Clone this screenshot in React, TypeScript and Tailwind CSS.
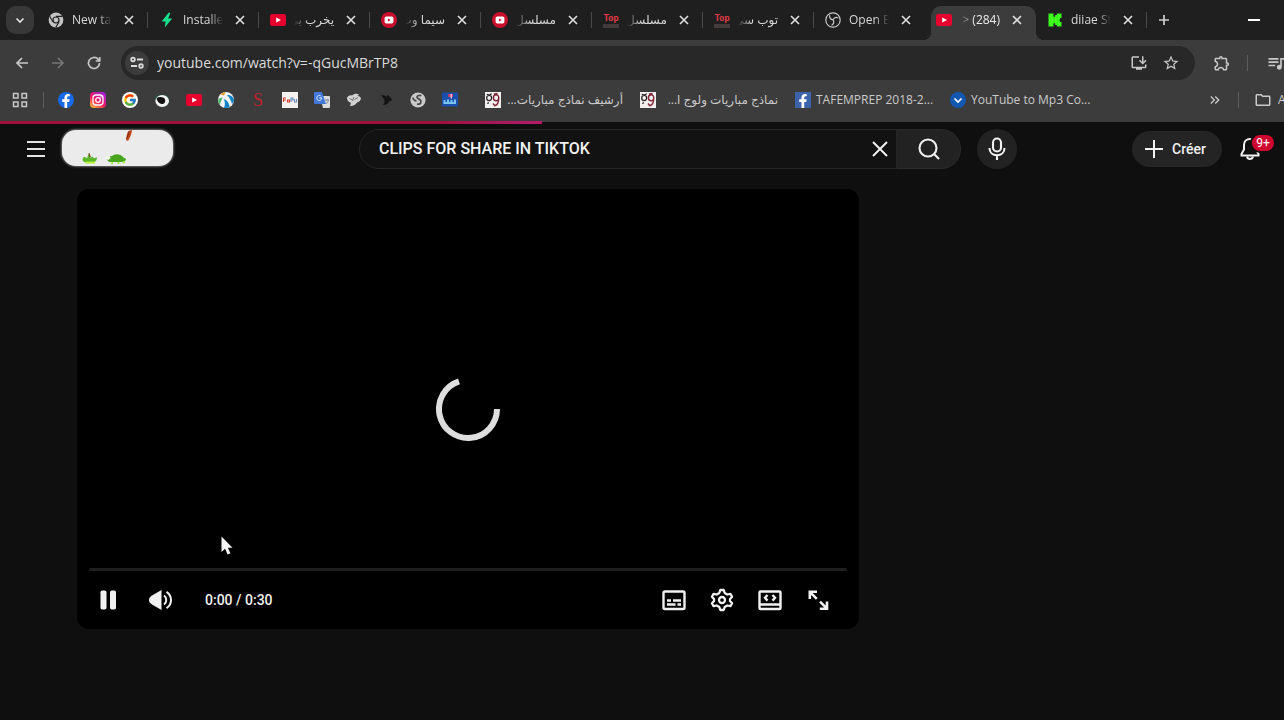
import { useState, type ReactNode } from 'react';
import { FcGoogle } from 'react-icons/fc';
import { FaFacebookF } from 'react-icons/fa';
import {
  MdKeyboardDoubleArrowRight,
  MdOutlineExtension,
  MdOutlineFolder,
  MdOutlineInstallDesktop,
  MdQueueMusic,
  MdStarOutline,
} from 'react-icons/md';

interface Tab {
  id: number;
  title: string;
  icon: ReactNode;
  rtl?: boolean;
  active?: boolean;
  divider?: boolean;
}

interface Bookmark {
  label: string;
  icon: ReactNode;
  rtl?: boolean;
}

/* ---------- line icons, drawn on a 16px grid ---------- */

const LINES = {
  close: 'M4 4l8 8M12 4l-8 8',
  plus: 'M8 3v10M3 8h10',
  chevron: 'M4.5 6.5 8 10l3.500-3.500',
  back: 'M14 8H3M8 3 3 8l5 5',
  forward: 'M2 8h11M8 3l5 5-5 5',
  reload: 'M13.500 8A5.500 5.500 0 1 1 12 4.200L13.500 5.800M13.700 2v4H9.700',
};

function LineIcon({ name }: { name: keyof typeof LINES }) {
  return (
    <svg viewBox="0 0 16 16" className="size-4" fill="none" stroke="currentColor" strokeWidth="1.700">
      <path d={LINES[name]} />
    </svg>
  );
}

/* ---------- favicons ---------- */

function ChromeIcon() {
  return (
    <svg viewBox="0 0 16 16" className="size-4">
      <circle cx="8" cy="8" r="7.4" fill="#c4c4c4" />
      <circle cx="8" cy="8" r="3.6" fill="#1f1f1f" />
      <circle cx="8" cy="8" r="2.4" fill="#c4c4c4" />
      <path d="M8 4.4h6.6M4.9 9.8 1.6 4.2M11.1 9.8 7.8 15.4" stroke="#1f1f1f" strokeWidth="1.1" />
    </svg>
  );
}

function BoltIcon() {
  return (
    <svg viewBox="0 0 16 16" className="size-4">
      <path d="M9.6.8 2.6 9.4h4L5.8 15.4 13.2 6.4H9.2L11.4.8z" fill="#19e08f" />
    </svg>
  );
}

function YoutubeIcon() {
  return (
    <svg viewBox="0 0 16 16" className="size-4">
      <rect x="0" y="2" width="16" height="12" rx="2" fill="#e6002d" />
      <path d="M6.2 5.4v5.2L11 8z" fill="#fff" />
    </svg>
  );
}

function CimaIcon() {
  return (
    <svg viewBox="0 0 16 16" className="size-4">
      <circle cx="8" cy="8" r="8" fill="#c8102e" />
      <rect x="3.6" y="4.6" width="8.8" height="6.8" rx="1.6" fill="#fff" />
      <path d="M7 6.4v3.2L9.6 8z" fill="#c8102e" />
    </svg>
  );
}

function TopIcon() {
  return (
    <span className="flex size-4 flex-col items-center justify-center font-['Roboto',sans-serif] leading-none">
      <b className="text-[9px] leading-[11px] text-[#e03a44]">Top</b>
      <span className="h-1 w-4 bg-[#453a3b]" />
    </span>
  );
}

function ObsIcon() {
  return (
    <svg viewBox="0 0 16 16" className="size-4" fill="none" stroke="#c8c8c8" strokeWidth="1.2">
      <circle cx="8" cy="8" r="7.2" />
      <path d="M4.6 3.2C4.4 5.800 5.800 7.600 8 7.800M8 7.800c1-2 3.200-2.800 5.400-1.800M8 7.800c1.200 2 .6 4.200-1.400 5.400" />
    </svg>
  );
}

function KickIcon() {
  return (
    <svg viewBox="0 0 16 16" className="size-4">
      <path
        d="M1.5 1.5h5v3.2h1.7V3h1.7V1.5h4.6v4.6h-1.6v1.8h-1.6v.4h1.6v1.8h1.6v4.4H9.9V13H8.2v-1.7H6.5v3.2h-5z"
        fill="#3dfc1c"
      />
    </svg>
  );
}

function FacebookRound() {
  return (
    <span className="flex size-4 items-end justify-center overflow-hidden rounded-full bg-[#1768e5] text-white">
      <FaFacebookF className="size-3.5" />
    </span>
  );
}

function InstagramIcon() {
  return (
    <svg viewBox="0 0 16 16" className="size-4" fill="none">
      <defs>
        <linearGradient id="insta" x1="0.1" y1="1" x2="0.8" y2="0">
          <stop offset="0" stopColor="#ffc13a" />
          <stop offset="0.45" stopColor="#f3175e" />
          <stop offset="1" stopColor="#a61ee0" />
        </linearGradient>
      </defs>
      <rect width="16" height="16" rx="4" fill="url(#insta)" />
      <rect x="3" y="3" width="10" height="10" rx="3" stroke="#fff" strokeWidth="1.3" />
      <circle cx="8" cy="8" r="2.3" stroke="#fff" strokeWidth="1.3" />
      <circle cx="11" cy="5" r="0.7" fill="#fff" />
    </svg>
  );
}

function GoogleIcon() {
  return (
    <span className="flex size-4 items-center justify-center rounded-full bg-white">
      <FcGoogle className="size-3.5" />
    </span>
  );
}

function EyeIcon() {
  return (
    <svg viewBox="0 0 16 16" className="size-4">
      <path d="M1 5c3-2 9-3 13 0 2 5 0 9-5 10C4 15 1 10 1 5z" fill="#1d5a3e" />
      <ellipse cx="8.2" cy="9" rx="6.8" ry="6" fill="#f4f4f4" />
      <path d="M2.600 6c3-1.800 7-1.200 8.400 1.200.8 3-1 5.200-3.600 4.800C4.800 11.600 3 9 2.600 6z" fill="#111" />
    </svg>
  );
}

function BallIcon() {
  return (
    <svg viewBox="0 0 16 16" className="size-4">
      <circle cx="8" cy="8" r="8" fill="#f3f3f3" />
      <path d="M9 3c4-.6 6.400 2 7 5-.2 1.600-1 3-2 4C13 8.600 11.600 5.600 9 3z" fill="#1685c8" />
      <path d="M5.800 7C9 8 11.400 11 11.600 15.200 9.600 16.200 7.600 16.200 6 15.700 7.400 12.600 7 9.600 5.800 7z" fill="#1685c8" />
      <path d="M2.400 2.400C4 1 5.600.3 7.600 0L6 3.600z" fill="#e3a02a" />
      <path d="M.4 7c1.600-1 3-1.600 4.200-1.600L1.600 12.800C.6 11.200 0 9 .4 7z" fill="#4fb96a" />
    </svg>
  );
}

function LetterS() {
  return (
    <span className="flex size-4 items-center justify-center font-['Liberation_Serif',serif] text-lg leading-none text-[#c3202f]">
      S
    </span>
  );
}

function PaperIcon() {
  return (
    <span className="flex size-4 items-center justify-center overflow-hidden bg-[#f4f1f1]">
      <svg viewBox="0 0 16 6" className="h-1.5 w-4" fill="none">
        <path d="M1.500 5V1h2.500M1.500 3H4M5.500 3v2h2V3z" stroke="#d8412f" strokeWidth="1.100" />
        <path d="M9 5V1h2v2H9M12.500 2v3h2V2" stroke="#6b8ac0" strokeWidth="1.100" />
      </svg>
    </span>
  );
}

function TranslateIcon() {
  return (
    <svg viewBox="0 0 16 16" className="size-4">
      <path d="M6 4h9a1 1 0 0 1 1 1v10a1 1 0 0 1-1 1H9z" fill="#dcdcdc" />
      <path d="M1 0h7l4 12H1a1 1 0 0 1-1-1V1a1 1 0 0 1 1-1z" fill="#4279d8" />
      <path
        d="M7.800 5.800H5.200M7.600 6c0 1.600-1 2.600-2.400 2.600S2.800 7.600 2.800 6 4 3.400 5.200 3.400c.7 0 1.200.2 1.600.6"
        stroke="#d6e2fa"
        fill="none"
      />
      <path d="M11 8h4M13 7v1M14.400 8c-.4 2-1.400 3-2.400 3.800" stroke="#5a6d90" fill="none" strokeWidth="0.800" />
    </svg>
  );
}

function WingIcon() {
  return (
    <svg viewBox="0 0 16 16" className="size-4">
      <path
        d="M1 6c1-2 2.500-3 5-2.500C8 1.500 11 1 13 2.500c-.4.800-1 1.200-2 1.500 2-.4 3.600.6 4 2.500-.6 2.500-2 3.500-4 4C9.500 13 7 14.500 3.500 14c1.500-1.200 1.500-2.500 1-3.500C2.500 10 1 8.500 1 6z"
        fill="#d2d2d2"
      />
      <path d="M3.500 6.500l3 1.500M8 5l-1.500 4M12 5.500 8.500 7.500" stroke="#666" strokeWidth="0.900" />
    </svg>
  );
}

function BirdIcon() {
  return (
    <svg viewBox="0 0 16 16" className="size-4">
      <path d="M2.500 3.500c3-.5 5 0 6.500 1.500V2.500L12 5l2.500 3L11 9.500C10 12 8 13.500 5 13c2-1.500 3-6-2.500-9.500z" fill="#141414" />
    </svg>
  );
}

function GlobeIcon() {
  return (
    <svg viewBox="0 0 16 16" className="size-4" fill="none">
      <circle cx="8" cy="8" r="7.6" fill="#c9c9c9" />
      <path d="M11.500 3.500C8.500 3 6.500 4 7 5.500S11 7 11 9.500 9 12.500 7 12M3 5.500c0 2 1.500 3 3.500 3.500" stroke="#4a4a4a" strokeWidth="1.700" />
    </svg>
  );
}

function PixelIcon() {
  return (
    <svg viewBox="0 0 16 16" className="size-4">
      <rect y="0.500" width="16" height="14" rx="1" fill="#1a4fae" />
      <path d="M6 2h5v3H6z" fill="#c23a6a" />
      <path d="M8.500 2h1.500v4.500H8.500z" fill="#e8b6cf" />
      <path d="M1.500 8h2v2h1.500V7.500h2V10h1.500V8h2v2H12V7.500h2V12H1.500z" fill="#7cc3f2" />
    </svg>
  );
}

function NinesIcon() {
  return (
    <svg viewBox="0 0 18 18" className="size-4" fill="none">
      <rect width="18" height="18" fill="#f3f0f0" />
      <path d="M2 2.500l3 1 2.500-1.500M7.500 6.500a2.800 3 0 1 0-2.800 3.200A2.800 3 0 0 0 7.500 6.500zM2.500 13l2-1" stroke="#2a2226" strokeWidth="1.400" />
      <path d="M15.500 6.500a3 3.400 0 1 0-3 3.400 3 3.400 0 0 0 3-3.400zM15.500 6.500c0 5-1 8-4.500 9L9 13M10 2.500l4-1" stroke="#7e2434" strokeWidth="1.600" />
    </svg>
  );
}

function FacebookSquare() {
  return (
    <span className="flex size-4 items-end justify-end bg-[#3e63ad] pr-px text-white">
      <FaFacebookF className="size-3.5" />
    </span>
  );
}

function DownBadge() {
  return (
    <span className="flex size-4 items-center justify-center rounded-full bg-[#1257b0] text-white">
      <LineIcon name="chevron" />
    </span>
  );
}

/* ---------- data ---------- */

const TABS: Tab[] = [
  { id: 1, title: 'New tab', icon: <ChromeIcon />, divider: true },
  { id: 2, title: 'Installed', icon: <BoltIcon />, divider: true },
  { id: 3, title: 'يخرب بي', icon: <YoutubeIcon />, rtl: true, divider: true },
  { id: 4, title: 'سيما وب', icon: <CimaIcon />, rtl: true, divider: true },
  { id: 5, title: 'مسلسل', icon: <CimaIcon />, rtl: true, divider: true },
  { id: 6, title: 'مسلسل', icon: <TopIcon />, rtl: true, divider: true },
  { id: 7, title: 'توب سي', icon: <TopIcon />, rtl: true, divider: true },
  { id: 8, title: 'Open B', icon: <ObsIcon /> },
  { id: 9, title: '> (284)', icon: <YoutubeIcon />, rtl: true, active: true },
  { id: 10, title: 'diiae St', icon: <KickIcon />, divider: true },
];

const SHORTCUTS: Bookmark[] = [
  { label: 'Facebook', icon: <FacebookRound /> },
  { label: 'Instagram', icon: <InstagramIcon /> },
  { label: 'Google', icon: <GoogleIcon /> },
  { label: 'Eye', icon: <EyeIcon /> },
  { label: 'YouTube', icon: <YoutubeIcon /> },
  { label: 'Sport', icon: <BallIcon /> },
  { label: 'S', icon: <LetterS /> },
  { label: 'Paper', icon: <PaperIcon /> },
  { label: 'Translate', icon: <TranslateIcon /> },
  { label: 'Wing', icon: <WingIcon /> },
  { label: 'Bird', icon: <BirdIcon /> },
  { label: 'Web', icon: <GlobeIcon /> },
  { label: 'Pixel', icon: <PixelIcon /> },
];

const BOOKMARKS: Bookmark[] = [
  { label: 'أرشيف نماذج مباريات...', icon: <NinesIcon />, rtl: true },
  { label: 'نماذج مباريات ولوج ا...', icon: <NinesIcon />, rtl: true },
  { label: 'TAFEMPREP 2018-2...', icon: <FacebookSquare /> },
  { label: 'YouTube to Mp3 Co...', icon: <DownBadge /> },
];

/* ---------- browser chrome ---------- */

function TabItem({ tab }: { tab: Tab }) {
  return (
    <div className="relative flex w-[111px] shrink-0 items-center">
      {tab.active && (
        <div className="absolute inset-x-[3px] top-1.5 bottom-0 rounded-t-[10px] bg-[#3c3c3c]">
          <span className="absolute bottom-0 -left-2 size-2 bg-[radial-gradient(circle_at_0_0,transparent_8px,#3c3c3c_8px)]" />
          <span className="absolute -right-2 bottom-0 size-2 bg-[radial-gradient(circle_at_100%_0,transparent_8px,#3c3c3c_8px)]" />
        </div>
      )}
      <button type="button" className="relative flex items-center gap-2 pl-2">
        <span className="size-4 shrink-0">{tab.icon}</span>
        <span
          dir={tab.rtl ? 'rtl' : 'ltr'}
          className={`w-10 overflow-hidden text-start text-xs leading-5 whitespace-nowrap ${
            tab.rtl
              ? '[mask-image:linear-gradient(to_left,black_65%,transparent)]'
              : '[mask-image:linear-gradient(to_right,black_65%,transparent)]'
          } ${tab.active ? 'text-[#ececec]' : 'text-[#d8d8d8]'}`}
        >
          <bdi dir="auto">{tab.title}</bdi>
        </span>
      </button>
      <button type="button" aria-label="Close tab" className="relative ml-[9px] flex size-4 items-center justify-center text-[#dcdcdc]">
        <LineIcon name="close" />
      </button>
      {tab.divider && <span className="ml-2.5 h-4 w-px bg-[#4a4a4a]" />}
    </div>
  );
}

function TabStrip() {
  return (
    <div className="flex h-10 overflow-hidden bg-[#1f1f1f]">
      <button
        type="button"
        aria-label="Search tabs"
        className="mx-1.5 mt-1.5 flex size-7 shrink-0 items-center justify-center rounded-[10px] bg-[#383838] text-[#e0e0e0]"
      >
        <LineIcon name="chevron" />
      </button>
      {TABS.map(tab => (
        <TabItem key={tab.id} tab={tab} />
      ))}
      <button type="button" aria-label="New tab" className="ml-1 flex w-5 shrink-0 items-center justify-center text-[#d0d0d0]">
        <LineIcon name="plus" />
      </button>
      <button type="button" aria-label="Minimize" className="mr-6 ml-auto flex w-3 items-center">
        <span className="h-0.5 w-full bg-white" />
      </button>
    </div>
  );
}

function AddressBar() {
  const [url, setUrl] = useState('youtube.com/watch?v=-qGucMBrTP8');

  return (
    <div className="flex h-[46px] items-center overflow-hidden">
      <div className="flex w-[121px] shrink-0 items-center gap-5 pl-3.5 text-[#c8c8c8]">
        <button type="button" aria-label="Back">
          <LineIcon name="back" />
        </button>
        <button type="button" aria-label="Forward" className="text-[#757575]">
          <LineIcon name="forward" />
        </button>
        <button type="button" aria-label="Reload">
          <LineIcon name="reload" />
        </button>
      </div>
      <div className="flex h-[34px] min-w-0 flex-1 items-center rounded-full bg-[#282828] pr-[15px] pl-1 text-[#c8c8c8]">
        <button type="button" aria-label="Site information" className="flex size-6 items-center justify-center rounded-full bg-[#3c3c3c]">
          <svg viewBox="0 0 16 16" className="size-4" fill="none" stroke="#dcdcdc" strokeWidth="1.800">
            <circle cx="4" cy="4.500" r="1.800" />
            <path d="M8 4.500h6M2 11h6" />
            <circle cx="12" cy="11" r="1.800" />
          </svg>
        </button>
        <input
          aria-label="Address"
          value={url}
          onChange={e => setUrl(e.target.value)}
          className="ml-2 min-w-0 flex-1 bg-transparent text-sm text-[#dadada] outline-none"
        />
        <button type="button" aria-label="Install app">
          <MdOutlineInstallDesktop className="size-[18px]" />
        </button>
        <button type="button" aria-label="Bookmark this page" className="ml-3.5">
          <MdStarOutline className="size-[18px]" />
        </button>
      </div>
      <div className="flex w-[89px] shrink-0 items-center text-[#c8c8c8]">
        <button type="button" aria-label="Extensions" className="ml-[18px] shrink-0">
          <MdOutlineExtension className="size-[18px]" />
        </button>
        <span className="ml-4 h-4 w-px shrink-0 bg-[#5c5c5c]" />
        <button type="button" aria-label="Media" className="ml-[18px] shrink-0">
          <MdQueueMusic className="size-5" />
        </button>
      </div>
    </div>
  );
}

function BookmarkBar() {
  return (
    <div className="flex h-9 items-start overflow-hidden text-xs leading-5 text-[#cacaca]">
      <div className="flex h-7 w-full items-center">
        <button type="button" aria-label="Apps" className="ml-3 shrink-0">
          <svg viewBox="0 0 16 16" className="size-4" fill="none" stroke="#c6c6c6" strokeWidth="1.500">
            <rect x="1.500" y="1.500" width="4.500" height="4.500" />
            <rect x="10" y="1.500" width="4.500" height="4.500" />
            <rect x="1.500" y="10" width="4.500" height="4.500" />
            <rect x="10" y="10" width="4.500" height="4.500" />
          </svg>
        </button>
        <span className="mr-3.5 ml-[15px] h-4 w-px shrink-0 bg-[#5c5c5c]" />
        <nav aria-label="Shortcuts" className="mr-[27px] flex shrink-0 gap-4">
          {SHORTCUTS.map(item => (
            <a key={item.label} href="#" aria-label={item.label} className="flex size-4 items-center justify-center">
              {item.icon}
            </a>
          ))}
        </nav>
        {BOOKMARKS.map(item => (
          <a key={item.label} href="#" className="mr-[17px] flex w-[138px] shrink-0 items-center gap-[5px]">
            <span className="size-4 shrink-0">{item.icon}</span>
            <span dir={item.rtl ? 'rtl' : 'ltr'} className="flex-1 whitespace-nowrap">
              {item.label}
            </span>
          </a>
        ))}
        <div className="ml-auto flex w-[77px] shrink-0 items-center overflow-hidden">
          <button type="button" aria-label="More bookmarks" className="shrink-0">
            <MdKeyboardDoubleArrowRight className="size-4" />
          </button>
          <span className="mx-[15px] h-4 w-px shrink-0 bg-[#5c5c5c]" />
          <a href="#" className="flex shrink-0 items-center gap-1.5">
            <MdOutlineFolder className="size-[18px]" />A
          </a>
        </div>
      </div>
    </div>
  );
}

/* ---------- page ---------- */

function DoodleLogo() {
  return (
    <a
      href="#"
      aria-label="Home"
      className="relative mb-0.5 ml-[17px] block h-9 w-[111px] overflow-hidden rounded-[14px] bg-[#ebebeb] shadow-[0_0_2px_1px_#6a6a6a]"
    >
      <svg viewBox="0 0 112 37" className="h-full w-full">
        <path d="M66 3c1-2 3-3 5-3-.5 4-2 8-4 11-2 .5-2.500-1-2-3z" fill="#c24a1c" />
        <path d="M68 1c-.5 3-1.500 6-2.500 8" stroke="#7c3414" />
        <path d="M20 31c0-2 1-4 3-3l2 1c0-2 .5-3 2-4l1 4c1-1 2-2 3-1l1 1 3-1c0 3-2 6-7 6-4 0-7-1-8-3z" fill="#5cb82a" />
        <path d="M23 33.500h10" stroke="#b4f03a" strokeWidth="2" />
        <path d="M26.500 24l1.500 4" stroke="#7b5a28" strokeWidth="1.500" />
        <path d="M45 30c0-3 3-4 5-3 3-3 9-3 12 1l3 2c-1 2-3 3-5 3H50c-3 0-4-1-5-3z" fill="#4aa51e" />
        <path d="M44 28l4-2 1 3-3 2z" fill="#f6fbe8" />
        <path d="M51 33l-1 2M57 33v2M62 32l1 2" stroke="#9bea3a" strokeWidth="2" />
      </svg>
    </a>
  );
}

function SearchBox() {
  const [query, setQuery] = useState('CLIPS FOR SHARE IN TIKTOK');

  return (
    <form role="search" className="flex h-10 min-w-0 flex-1" onSubmit={e => e.preventDefault()}>
      <div className="flex min-w-0 flex-1 items-center rounded-l-full border border-[#262626] bg-[#121212] pr-1.5 pl-[19px]">
        <input
          aria-label="Rechercher"
          value={query}
          onChange={e => setQuery(e.target.value)}
          className="min-w-0 flex-1 bg-transparent text-base font-medium text-[#f1f1f1] outline-none"
        />
        <button type="button" aria-label="Effacer" onClick={() => setQuery('')}>
          <svg viewBox="0 0 20 20" className="size-5" fill="none" stroke="#f1f1f1" strokeWidth="2">
            <path d="M3 3l14 14M17 3 3 17" />
          </svg>
        </button>
      </div>
      <button
        type="submit"
        aria-label="Lancer la recherche"
        className="flex w-16 items-center justify-center rounded-r-full border border-l-0 border-[#2b2b2b] bg-[#222]"
      >
        <svg viewBox="0 0 24 24" className="size-6" fill="none" stroke="#f1f1f1" strokeWidth="2.100">
          <circle cx="11" cy="11" r="8.500" />
          <path d="M17 17l5 5" />
        </svg>
      </button>
    </form>
  );
}

function Masthead() {
  return (
    <header className="flex h-[53px] items-center">
      <div className="flex w-[359px] shrink-0 items-center pl-[27px]">
        <button type="button" aria-label="Menu" className="flex h-4 w-[18px] flex-col justify-between">
          <span className="h-0.5 w-full bg-[#e4e4e4]" />
          <span className="h-0.5 w-full bg-[#e4e4e4]" />
          <span className="h-0.5 w-full bg-[#e4e4e4]" />
        </button>
        <DoodleLogo />
      </div>
      <div className="flex min-w-0 flex-1 gap-4">
        <SearchBox />
        <button type="button" aria-label="Recherche vocale" className="flex size-10 shrink-0 items-center justify-center rounded-full bg-[#222]">
          <svg viewBox="0 0 24 24" className="size-6" fill="none" stroke="#f1f1f1" strokeWidth="2.100">
            <rect x="8" y="1.500" width="8" height="13" rx="4" />
            <path d="M4.500 11c0 4.500 3.200 7.300 7.500 7.300s7.500-2.800 7.500-7.300M12 18.300V23" />
          </svg>
        </button>
      </div>
      <div className="flex w-[267px] shrink-0 items-center justify-end pr-2.5">
        <button
          type="button"
          className="flex h-9 items-center gap-2 rounded-full bg-[#242424] pr-4 pl-3 text-sm font-medium text-[#f1f1f1]"
        >
          <svg viewBox="0 0 20 20" className="size-5" stroke="#f1f1f1" strokeWidth="2">
            <path d="M10 1v18M1 10h18" />
          </svg>
          Créer
        </button>
        <button type="button" aria-label="Notifications" className="relative ml-4 flex h-10 w-9 items-center">
          <svg viewBox="0 0 24 24" className="size-6" fill="none" stroke="#f1f1f1" strokeWidth="2">
            <path d="M12 2C8.400 2 6 4.600 6 8v4.500L3.500 17v1.500h17V17L18 12.500V8c0-3.400-2.400-6-6-6z" />
            <path d="M9 19.500c.4 1.600 1.500 2.500 3 2.500s2.600-.9 3-2.500" />
          </svg>
          <span className="absolute top-1.5 right-0 flex h-4 w-[22px] items-center justify-center rounded-full bg-[#d0052f] text-xs text-white ring-2 ring-[#0f0f0f]">
            9+
          </span>
        </button>
      </div>
    </header>
  );
}

function ControlButton({ label, children }: { label: string; children: ReactNode }) {
  return (
    <button type="button" aria-label={label} className="flex size-12 items-center justify-center">
      {children}
    </button>
  );
}

function Player() {
  return (
    <section aria-label="Lecteur vidéo" className="relative flex aspect-video w-full flex-col rounded-xl bg-black">
      <div className="absolute inset-0 flex items-center justify-center">
        <svg viewBox="0 0 64 64" className="size-16" fill="none">
          <path d="M61 32A29 29 0 1 1 23 4.400" stroke="#dedede" strokeWidth="6" />
        </svg>
      </div>
      <svg viewBox="0 0 12 19" className="absolute top-[347px] left-36 h-[19px] w-3">
        <path d="M.5.500v15.500l3.600-3.300 2.500 5.800 2.800-1.200-2.500-5.600h4.600z" fill="#f4f4f4" />
      </svg>

      <div className="relative mt-auto">
        <div className="mx-3 h-[3px] rounded-full bg-[#1e1e1e]" />
        <div className="flex h-[58px] items-center pr-[17px] pl-2 text-[#f1f1f1]">
          <ControlButton label="Pause">
            <svg viewBox="0 0 24 24" className="size-6" fill="#f1f1f1">
              <rect x="3.500" y="2.500" width="6" height="19" rx="1.800" />
              <rect x="13" y="2.500" width="6" height="19" rx="1.800" />
            </svg>
          </ControlButton>
          <ControlButton label="Volume">
            <svg viewBox="0 0 24 24" className="ml-2 size-6" fill="none">
              <path d="M12.500 2v20L3 16.500C1 15.200 0 14 0 12s1-3.200 3-4.500z" fill="#f1f1f1" />
              <path d="M15 7.500c3 2 3 7 0 9M17.500 3.800c6 4 6 12.400 0 16.400" stroke="#f1f1f1" strokeWidth="2" />
            </svg>
          </ControlButton>
          <span className="ml-6 text-sm font-medium">0:00 / 0:30</span>
          <div className="ml-auto flex">
            <ControlButton label="Sous-titres">
              <svg viewBox="0 0 24 24" className="size-6" fill="none" stroke="#f1f1f1" strokeWidth="2.400">
                <rect x="1.500" y="3.500" width="21" height="17.500" rx="1.500" />
                <path d="M5 12.500h4M11 12.500h8M5 16.500h8.500M15.500 16.500H19" />
              </svg>
            </ControlButton>
            <ControlButton label="Paramètres">
              <svg viewBox="0 0 24 24" className="size-6" fill="none" stroke="#f1f1f1" strokeWidth="2.300" strokeLinejoin="round">
                <path d="M10.300 2h3.400l1 3 2.600 1.500 3.100-.7 1.700 3L20 11v2l2.100 2.200-1.700 3-3.100-.7-2.600 1.500-1 3h-3.400l-1-3-2.600-1.500-3.100.7-1.700-3L4 13v-2L1.900 8.800l1.700-3 3.100.7L9.300 5z" />
                <circle cx="12" cy="12" r="3" />
              </svg>
            </ControlButton>
            <ControlButton label="Mode cinéma">
              <svg viewBox="0 0 24 24" className="size-6" fill="none" stroke="#f1f1f1" strokeWidth="2.400">
                <rect x="1.500" y="3.500" width="21" height="17.500" rx="1" />
                <path d="M1 16.500h22M9.500 7 7 9.800l2.500 2.800M14.500 7 17 9.800l-2.500 2.800" />
              </svg>
            </ControlButton>
            <ControlButton label="Plein écran">
              <svg viewBox="0 0 24 24" className="size-6" fill="none" stroke="#f1f1f1" strokeWidth="2.600">
                <path d="M3.800 11V3.800H11M3.800 3.800l7 7M21 13.500v7.200h-7.200M21 20.700l-7-7" />
              </svg>
            </ControlButton>
          </div>
        </div>
      </div>
    </section>
  );
}

export default function App() {
  return (
    <div className="min-h-screen overflow-hidden bg-[#0f0f0f] font-['Roboto',sans-serif]">
      <div className="bg-[#3c3c3c] font-['Open_Sans','Noto_Sans','DejaVu_Sans',sans-serif]">
        <TabStrip />
        <AddressBar />
        <BookmarkBar />
      </div>
      <div className="relative">
        <div className="absolute -top-px left-0 h-[3px] w-[42.2%] bg-linear-to-r from-[#9c123c] from-80% to-[#b51a6e]" />
        <Masthead />
        <main className="pt-3.5 pr-[425px] pl-[77px]">
          <Player />
        </main>
      </div>
    </div>
  );
}
